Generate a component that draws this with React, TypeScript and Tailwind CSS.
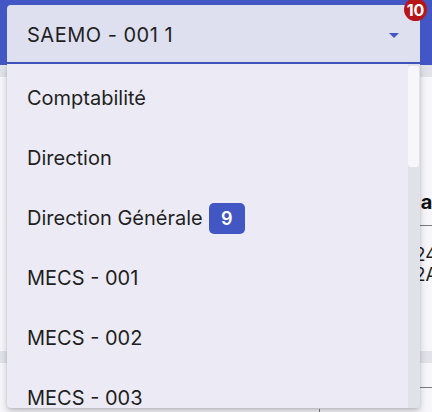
import { useState } from 'react';

const services = [
  { name: 'Comptabilité' },
  { name: 'Direction' },
  { name: 'Direction Générale', count: 9 },
  { name: 'MECS - 001' },
  { name: 'MECS - 002' },
  { name: 'MECS - 003' },
  { name: 'MECS - 004' },
];

export default function App() {
  const [current] = useState('SAEMO - 001 1');

  return (
    <div className="relative w-[432px] h-[412px] overflow-hidden bg-[#f6f6fb] font-['Inter',sans-serif] text-[#1f1f1f]">
      {/* page behind the menu */}
      <div className="h-[65px] bg-[#4257c3]" />
      <div className="h-[12px] bg-[#e2e2ea]" />
      <div className="flex">
        <div className="w-[402px] shrink-0" />
        <div className="w-[200px] shrink-0 pt-[113px] whitespace-nowrap">
          <div className="text-[20px] font-bold leading-[24px] text-[#111]">Mail</div>
          <div className="mt-[11px] h-px bg-[#7a7a85]" />
          <div className="mt-[19px] text-[18px] leading-[20px]">1:24</div>
          <div className="text-[18px] leading-[20px]">1:2A</div>
        </div>
      </div>
      <div className="mt-[66px] h-[12px] bg-[#e2e2ea]" />
      <div className="flex">
        <div className="w-[320px] shrink-0" />
        <div className="flex-1 mt-[24px] h-px bg-[#7a7a85]" />
      </div>
      <div className="flex mt-[21px]">
        <div className="w-[320px] shrink-0 border-r border-[#7a7a85]" />
        <div className="pl-[20px] text-[20px] leading-[24px] text-[#444] whitespace-nowrap">Rech</div>
      </div>

      {/* select */}
      <div className="absolute left-[7px] top-[5px] w-[413px] h-[59px] rounded-t-[4px] bg-[#dfe0ef] border-b-2 border-[#4257c3] flex items-center pl-[20px] pr-[14px]">
        <span className="text-[20px] leading-none pt-[2px] tracking-[0.5px] whitespace-pre">{current}</span>
        <svg className="ml-auto mt-[2px]" width="24" height="24" viewBox="0 0 24 24">
          <path d="M7 10l5 5 5-5z" fill="#4257c3" />
        </svg>
      </div>
      <div className="absolute left-[404px] top-[-2px] w-[23px] h-[23px] rounded-full bg-[#b8151b] text-white text-[16px] font-bold flex items-center justify-center leading-none pt-[1px]">
        10
      </div>

      {/* dropdown menu */}
      <div className="absolute left-[7px] top-[64px] w-[413px] h-[344px] rounded-b-[4px] bg-[#ecebf5] shadow-[0_4px_8px_rgba(0,0,0,0.18),0_1px_3px_rgba(0,0,0,0.12)] overflow-hidden flex">
        <ul className="flex-1 pt-[4px]">
          {services.map((s) => (
            <li key={s.name} className="h-[60px] flex items-center pl-[20px] text-[20px]">
              <span>{s.name}</span>
              {s.count && (
                <span className="ml-[6px] w-[36px] h-[31px] rounded-[5px] bg-[#4257c4] text-white text-[18px] font-semibold flex items-center justify-center">
                  {s.count}
                </span>
              )}
            </li>
          ))}
        </ul>
        <div className="w-[12px] bg-[#e1e1e9] pt-[2px]">
          <div className="w-[11px] h-[101px] rounded-[3px] bg-[#f6f6fb]" />
        </div>
      </div>
    </div>
  );
}
